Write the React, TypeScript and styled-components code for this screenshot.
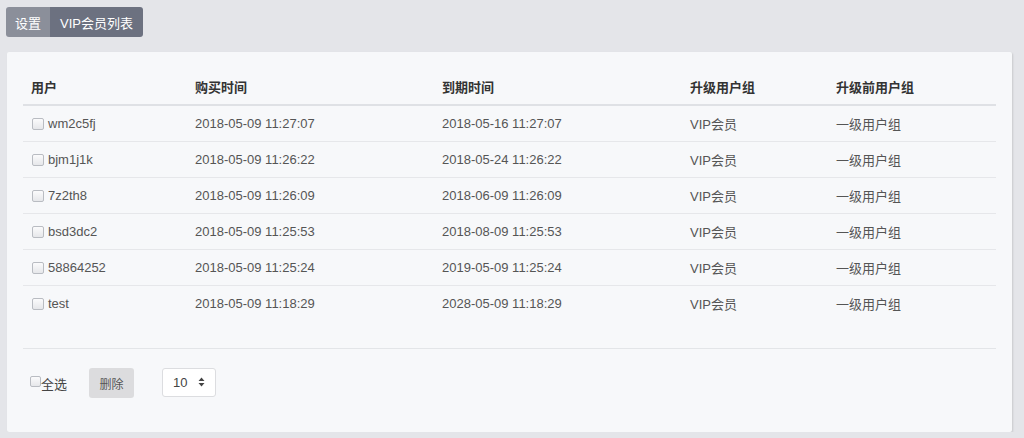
import styled, { createGlobalStyle } from "styled-components"

const GlobalStyle = createGlobalStyle`
  html, body {
    margin: 0;
    padding: 0;
    background: #e4e5e9;
    font-family: "Liberation Sans", "Noto Sans CJK SC", sans-serif;
  }
`

const Page = styled.div`
  padding: 7px 12px 0 7px;
`

const Tabs = styled.div`
  display: flex;
  height: 30px;
  margin-left: -1px;
`

const Tab = styled.div<{ $active?: boolean }>`
  display: flex;
  align-items: center;
  padding: 0 ${(p) => (p.$active ? "10px" : "9px")};
  background: ${(p) => (p.$active ? "#6c7180" : "#8b8f9a")};
  color: #fff;
  font-size: 13px;
  border-radius: ${(p) => (p.$active ? "0 3px 3px 0" : "3px 0 0 3px")};
`

const Card = styled.div`
  margin-top: 15px;
  background: #f7f8fa;
  border-radius: 2px;
  box-shadow: 1px 1px 2px rgba(0, 0, 0, 0.12);
  padding: 17px 16px 34px 16px;
`

const Row = styled.div<{ $head?: boolean; $last?: boolean }>`
  display: grid;
  grid-template-columns: 164px 247px 248px 146px 1fr;
  height: 35px;
  align-items: center;
  border-bottom: ${(p) =>
    p.$head ? "2px solid #dfe1e5" : p.$last ? "none" : "1px solid #e6e7ea"};
  font-size: 13px;
  color: ${(p) => (p.$head ? "#333" : "#555")};
  font-weight: ${(p) => (p.$head ? "bold" : "normal")};
`

const Cell = styled.div`
  padding-left: 8px;
  display: flex;
  align-items: center;
  white-space: nowrap;
`

const Box = styled.span`
  display: inline-block;
  width: 10px;
  height: 10px;
  border: 1px solid #b9bcc2;
  border-radius: 2px;
  background: linear-gradient(#fbfbfc, #e6e7ea);
  margin-right: 4px;
  margin-left: 1px;
`

const Spacer = styled.div`
  height: 27px;
  border-bottom: 1px solid #e3e5e8;
`

const Footer = styled.div`
  display: flex;
  align-items: center;
  padding: 19px 0 0 7px;
  font-size: 13px;
  color: #444;
`

const SelectAll = styled.label`
  display: flex;
  align-items: center;
  margin-right: 22px;
  ${Box} {
    width: 9px;
    height: 9px;
    margin: -3px 0 0 0;
  }
`

const DeleteButton = styled.div`
  width: 45px;
  height: 30px;
  display: flex;
  align-items: center;
  justify-content: center;
  background: #dcdcde;
  border-radius: 3px;
  color: #555;
  font-size: 12px;
  margin-right: 28px;
`

const PageSize = styled.div`
  width: 54px;
  height: 29px;
  display: flex;
  align-items: center;
  justify-content: space-between;
  padding: 0 10px 0 10px;
  box-sizing: border-box;
  background: #fff;
  border: 1px solid #dcdde0;
  border-radius: 3px;
  color: #444;
  font-size: 13px;
  margin-top: -2px;
`

const rows = [
  ["wm2c5fj", "2018-05-09 11:27:07", "2018-05-16 11:27:07"],
  ["bjm1j1k", "2018-05-09 11:26:22", "2018-05-24 11:26:22"],
  ["7z2th8", "2018-05-09 11:26:09", "2018-06-09 11:26:09"],
  ["bsd3dc2", "2018-05-09 11:25:53", "2018-08-09 11:25:53"],
  ["58864252", "2018-05-09 11:25:24", "2019-05-09 11:25:24"],
  ["test", "2018-05-09 11:18:29", "2028-05-09 11:18:29"],
]

const App = () => {
  return (
    <Page>
      <GlobalStyle />
      <Tabs>
        <Tab>设置</Tab>
        <Tab $active>VIP会员列表</Tab>
      </Tabs>
      <Card>
        <Row $head>
          <Cell>用户</Cell>
          <Cell>购买时间</Cell>
          <Cell>到期时间</Cell>
          <Cell>升级用户组</Cell>
          <Cell>升级前用户组</Cell>
        </Row>
        {rows.map((r, i) => (
          <Row key={r[0]} $last={i === rows.length - 1}>
            <Cell>
              <Box />
              {r[0]}
            </Cell>
            <Cell>{r[1]}</Cell>
            <Cell>{r[2]}</Cell>
            <Cell>VIP会员</Cell>
            <Cell>一级用户组</Cell>
          </Row>
        ))}
        <Spacer />
        <Footer>
          <SelectAll>
            <Box />
            全选
          </SelectAll>
          <DeleteButton>删除</DeleteButton>
          <PageSize>
            10
            <svg width="7" height="10" viewBox="0 0 7 10">
              <path d="M3.5 0.5 L6.5 4 H0.5 Z M3.5 9.5 L6.5 6 H0.5 Z" fill="#444" />
            </svg>
          </PageSize>
        </Footer>
      </Card>
    </Page>
  )
}

export default App
